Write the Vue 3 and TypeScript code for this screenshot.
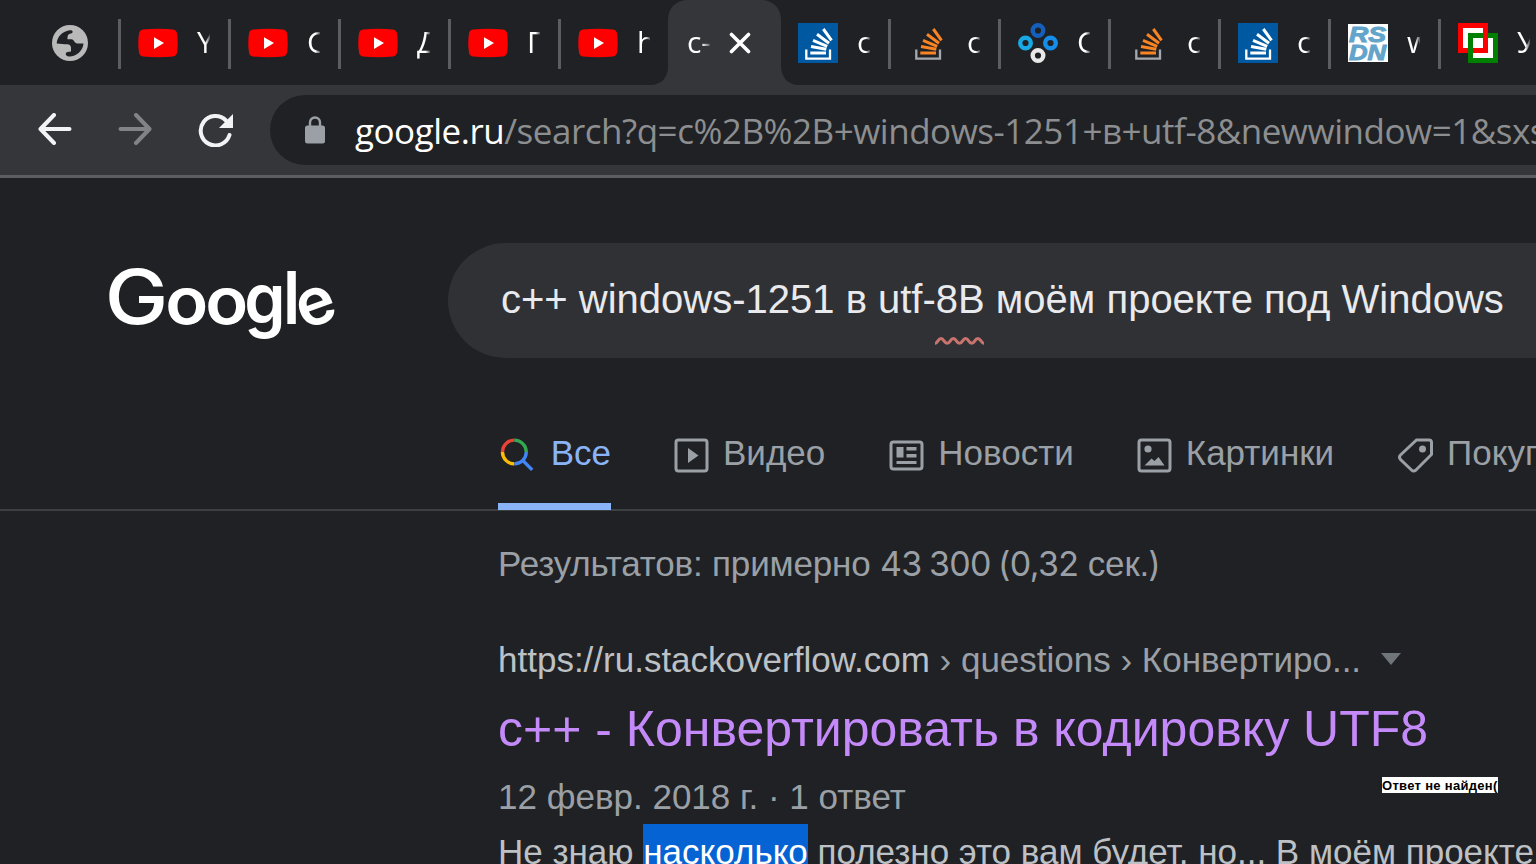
<script setup lang="ts">
interface Tab {
  icon: 'youtube' | 'so-blue' | 'so-orange' | 'nodes' | 'rsdn' | 'squares'
  title: string
  active?: boolean
  bare?: boolean
}

const tabs: Tab[] = [
  { icon: 'youtube', title: 'Yo' },
  { icon: 'youtube', title: 'Ca' },
  { icon: 'youtube', title: 'Де' },
  { icon: 'youtube', title: 'Пр' },
  { icon: 'youtube', title: 'ht', bare: true },
  { icon: 'so-blue', title: 'c-', active: true, bare: true },
  { icon: 'so-blue', title: 'c+' },
  { icon: 'so-orange', title: 'c+' },
  { icon: 'nodes', title: 'Co' },
  { icon: 'so-orange', title: 'c+' },
  { icon: 'so-blue', title: 'c+' },
  { icon: 'rsdn', title: 'wi' },
  { icon: 'squares', title: 'Ут' },
]
</script>

<template>
  <div class="screen">
    <div class="tabstrip">
      <div class="tab pinned">
        <svg width="36" height="36" viewBox="0 0 36 36">
          <circle cx="18" cy="18" r="18" fill="#b9b9b9" />
          <path d="M4.700 18.500C5 12 10 6.500 17.500 5.200C21.500 4.800 21.500 8 19 8.500C15.500 9 15.500 11 15.500 14.300L19.500 14.300C22.500 14.500 22 18.500 25.500 18.500L31.500 18.500C31 26 24 31.800 17 31.500C13 31.300 13 27.500 15.500 27L19 26.500V22.500C18.500 19.500 17 19.200 13 19.200Z" fill="#202124" />
        </svg>
        <i class="sep"></i>
      </div>
      <div v-for="(tab, i) in tabs" :key="i" class="tab" :class="{ active: tab.active }">
        <template v-if="tab.active">
          <svg class="tab-shape" width="150" height="85" viewBox="0 0 150 85">
            <path d="M0 85C12 85 18 77 18 66V20C18 8 26 0 38 0H111C123 0 131 8 131 20V66C131 77 138 85 149 85Z" fill="#35363a" />
          </svg>
        </template>
        <template v-else>
          <svg v-if="tab.icon === 'youtube'" class="fav" viewBox="0 0 40 40">
            <path d="M5 6.500Q20 5 35 6.500Q38.500 7 39 10.500Q40.500 20 39 29.500Q38.500 33 35 33.500Q20 35 5 33.500Q1.500 33 1 29.500Q-.500 20 1 10.500Q1.500 7 5 6.500Z" fill="#f00" />
            <path d="M16 14.200L26 20L16 26Z" fill="#fff" />
          </svg>
          <svg v-else-if="tab.icon === 'so-blue' || tab.icon === 'so-orange'" class="fav" viewBox="0 0 40 40">
            <rect v-if="tab.icon === 'so-blue'" width="40" height="40" fill="#0059a0" />
            <path d="M8.300 26.500V35.700H32V26.500" fill="none" :stroke="tab.icon === 'so-blue' ? '#fff' : '#a4a9b0'" stroke-width="2.300" />
            <path d="M12.300 30H28M13 23.600L28.300 26.300M15 17.300L29.200 23.300M19 11.300L31 20.300M25.300 6L33.500 17.300" fill="none" :stroke="tab.icon === 'so-blue' ? '#fff' : '#f98423'" stroke-width="3" />
          </svg>
          <svg v-else-if="tab.icon === 'nodes'" class="fav" viewBox="0 0 40 40" fill="none" stroke-width="4.400">
            <circle cx="20" cy="7.500" r="5.300" stroke="#1560bd" />
            <circle cx="7.500" cy="20" r="5.300" stroke="#19a8e4" />
            <circle cx="32.500" cy="20" r="5.300" stroke="#168de8" />
            <circle cx="20" cy="32.500" r="5.300" stroke="#e8e8e8" />
          </svg>
          <svg v-else-if="tab.icon === 'rsdn'" class="fav" viewBox="0 0 40 40">
            <rect y="1" width="40" height="38" fill="#fff" />
            <g class="rsdn-text" fill="#63a4ca" stroke="#63a4ca" stroke-width="1">
              <text x="1" y="19" textLength="37" lengthAdjust="spacingAndGlyphs">RS</text>
              <text x="1" y="37" textLength="37" lengthAdjust="spacingAndGlyphs">DN</text>
            </g>
          </svg>
          <svg v-else class="fav" viewBox="0 0 40 40">
            <path d="M2.500 2.500H27.500V27.500H2.500Z" fill="#fff" stroke="#f00" stroke-width="5" />
            <path d="M12.500 12.500H37.500V37.500H12.500Z" fill="#fff" stroke="#008000" stroke-width="5" />
            <path d="M27.500 9V27.500H15" fill="none" stroke="#f00" stroke-width="5" />
          </svg>
        </template>
        <span class="tab-title">{{ tab.title }}</span>
        <svg v-if="tab.active" class="close" width="22" height="22" viewBox="0 0 22 22">
          <path d="M2.500 2.500L19.500 19.500M19.500 2.500L2.500 19.500" stroke="#fff" stroke-width="3.600" stroke-linecap="round" />
        </svg>
        <i v-if="!tab.bare" class="sep"></i>
      </div>
    </div>

    <div class="toolbar">
      <svg class="nav-icon" width="34" height="32" viewBox="0 0 34 32" fill="none" stroke="#f1f3f4" stroke-width="4" stroke-linecap="round" stroke-linejoin="round">
        <path d="M31.500 16H3M16 2L2.500 16L16 30" />
      </svg>
      <svg class="nav-icon forward" width="34" height="32" viewBox="0 0 34 32" fill="none" stroke="#828387" stroke-width="4" stroke-linecap="round" stroke-linejoin="round">
        <path d="M2.500 16H31M18 2L31.500 16L18 30" />
      </svg>
      <svg class="nav-icon reload" width="36" height="34" viewBox="0 0 36 34">
        <path d="M31.500 22A14.700 14.700 0 1 1 28 7.500" fill="none" stroke="#f1f3f4" stroke-width="4" stroke-linecap="round" />
        <path d="M35 1V15H21Z" fill="#f1f3f4" />
      </svg>
      <div class="omnibox">
        <svg width="20" height="28" viewBox="0 0 20 28">
          <rect y="9.500" width="20" height="18" rx="2.500" fill="#9aa0a6" />
          <path d="M5 10V6.500a5 5 0 0 1 10 0V10" fill="none" stroke="#9aa0a6" stroke-width="2.400" />
        </svg>
        <div class="url"><b>google.ru</b><span>/search?q=c%2B%2B+windows-1251+в+utf-8&amp;newwindow=1&amp;sxsrf</span></div>
      </div>
    </div>

    <header class="search-head">
      <svg class="logo" width="240" height="90" viewBox="0 0 240 90" role="img" aria-label="Google">
        <g fill="#fff" text-anchor="middle">
          <text class="cap" transform="translate(31.500 65) scale(1.120 1)">G</text>
          <text transform="translate(81.800 65) scale(1.070 1)">o</text>
          <text transform="translate(121.800 65) scale(1.070 1)">o</text>
          <text transform="translate(160 65) scale(1 1.060)">g</text>
          <text class="ell" transform="translate(186.700 65) scale(.900 1)">l</text>
          <text transform="translate(211 47.500) rotate(-20) translate(0 18)">e</text>
        </g>
      </svg>
      <div class="search-box">
        <span class="query">c++ windows-1251 в utf-<span class="typo">8В<svg width="49" height="12" viewBox="0 0 49 12"><path d="M0 8.500C3 8 3 3.500 6 3.500S9 8.300 12.200 8.300S15.200 3.500 18.300 3.500S21.300 8.300 24.500 8.300S27.500 3.500 30.600 3.500S33.600 8.300 36.700 8.300S39.800 3.500 42.800 3.500S46 8 49 8.500" fill="none" stroke="#c9736f" stroke-width="3" /></svg></span> моём проекте под Windows</span>
      </div>
    </header>

    <nav class="filters">
      <a class="filter current">
        <svg width="35" height="36" viewBox="0 0 35 36" fill="none" stroke-width="3.400">
          <path d="M2.500 16A12 12 0 0 1 14.500 4" stroke="#ea4335" />
          <path d="M14.500 4A12 12 0 0 1 26.500 16" stroke="#34a853" />
          <path d="M2.500 16A12 12 0 0 0 14.500 28" stroke="#fbbc05" />
          <path d="M26.500 16A12 12 0 0 1 14.500 28M22.500 24L32.500 34" stroke="#4285f4" />
        </svg>
        <span>Все</span>
      </a>
      <a class="filter video">
        <svg width="35" height="35" viewBox="0 0 35 35">
          <rect x="2" y="2" width="31" height="31" rx="2.500" fill="none" stroke="#9aa0a6" stroke-width="3" />
          <path d="M14 10L24.500 17.500L14 25Z" fill="#9aa0a6" />
        </svg>
        <span>Видео</span>
      </a>
      <a class="filter news">
        <svg width="35" height="35" viewBox="0 0 35 35">
          <rect x="2" y="4" width="31" height="27" rx="2.500" fill="none" stroke="#9aa0a6" stroke-width="3" />
          <path d="M7.500 9H14.500V19.500H7.500ZM17.500 9H27.500V12.500H17.500ZM17.500 16H27.500V19.500H17.500ZM7.500 23H27.500V26H7.500Z" fill="#9aa0a6" />
        </svg>
        <span>Новости</span>
      </a>
      <a class="filter images">
        <svg width="35" height="35" viewBox="0 0 35 35">
          <rect x="2" y="2" width="31" height="31" rx="2.500" fill="none" stroke="#9aa0a6" stroke-width="3" />
          <circle cx="11" cy="11" r="3.600" fill="#9aa0a6" />
          <path d="M7.500 27.500L14.500 20.500L17.500 23L21.500 19L27.500 27.500Z" fill="#9aa0a6" />
        </svg>
        <span>Картинки</span>
      </a>
      <a class="filter shop">
        <svg width="36" height="35" viewBox="0 0 36 35">
          <path d="M18.500 2H31Q33.500 2 33.500 4.500V16.500L18 32Q15.500 34 13.500 32L2.500 21.500Q.500 19 2.500 17Z" fill="none" stroke="#9aa0a6" stroke-width="3" />
          <circle cx="24.500" cy="11" r="3.500" fill="#9aa0a6" />
        </svg>
        <span>Покупки</span>
      </a>
    </nav>

    <main class="results">
      <div class="stats">Результатов: примерно <span>43 300 (0,32</span> сек.<span>)</span></div>
      <div class="cite"><b>https://ru.stackoverflow.com</b> › questions › Конвертиро...
        <svg width="20" height="12" viewBox="0 0 20 12"><path d="M0 0H20L10 12Z" fill="#70757a" /></svg>
      </div>
      <h3 class="title">c++ - Конвертировать в кодировку UTF8</h3>
      <div class="date">12 февр. 2018 г. · 1 ответ</div>
      <p class="snippet">Не знаю <mark>насколько</mark> полезно это вам будет, но... В моём проекте</p>
    </main>
    <div class="note">Ответ не найден(</div>
  </div>
</template>

<style>
body {
  background: #202124;
  overflow: hidden;
}
</style>

<style scoped>
.screen {
  position: relative;
  width: 1536px;
  height: 864px;
  overflow: hidden;
  background: #202124;
  font-family: "Liberation Sans", Arial, sans-serif;
  white-space: nowrap;
}
.tabstrip {
  display: flex;
  height: 85px;
}
.tab {
  position: relative;
  flex: none;
  display: flex;
  align-items: center;
  width: 110px;
  height: 85px;
  padding-left: 17px;
  box-sizing: border-box;
}
.tab.pinned {
  width: 121px;
  padding-left: 52px;
}
.fav {
  flex: none;
  width: 40px;
  height: 40px;
  margin-top: 1px;
}
.sep {
  width: 3px;
  height: 50px;
  margin: 3px 0 0 auto;
  background: #5c5d60;
}
.tab-title {
  width: 13px;
  height: 40px;
  margin: 0 0 2px 19px;
  overflow: hidden;
  color: #fff;
  font: 30px/40px "Open Sans", "Noto Sans", sans-serif;
  -webkit-mask-image: linear-gradient(90deg, #000 65%, rgba(0, 0, 0, 0.2));
  mask-image: linear-gradient(90deg, #000 65%, rgba(0, 0, 0, 0.2));
}
.active .tab-title {
  position: relative;
  width: 23px;
  margin-left: -1px;
}
.tab-shape {
  position: absolute;
  left: -21px;
  top: 0;
}
.close {
  position: relative;
  margin-left: 19px;
}
.rsdn-text {
  font: italic 700 22px "Liberation Sans", Arial, sans-serif;
}
.toolbar {
  display: flex;
  align-items: center;
  height: 90px;
  padding-left: 38px;
  background: #35363a;
  border-bottom: 3px solid #5d5e61;
}
.nav-icon {
  flex: none;
  margin-top: -2px;
}
.forward {
  margin-left: 46px;
}
.reload {
  margin-top: -1px;
  margin-left: 46px;
}
.omnibox {
  flex: 1;
  display: flex;
  align-items: center;
  height: 70px;
  margin-left: 36px;
  padding-left: 35px;
  border-radius: 35px 0 0 35px;
  background: #202124;
  overflow: hidden;
}
.omnibox svg {
  flex: none;
}
.url {
  margin: 1px 0 0 30px;
  color: #8c8e90;
  font: 35px/50px "Open Sans", "Noto Sans", sans-serif;
  letter-spacing: -0.48px;
}
.url b {
  color: #fff;
  font-weight: 400;
}
.search-head {
  display: flex;
  height: 180px;
  padding-top: 65px;
  box-sizing: border-box;
}
.logo {
  flex: none;
  margin: 16px 103px 0 105px;
  overflow: visible;
  font: 600 66px Inter, sans-serif;
}
.cap {
  font-size: 76px;
  font-weight: 500;
}
.ell {
  font-size: 73px;
}
.search-box {
  flex: 1;
  height: 115px;
  padding-left: 53px;
  box-sizing: border-box;
  border-radius: 58px 0 0 58px;
  background: #303134;
  color: #e8eaed;
  font-size: 40px;
  line-height: 113px;
}
.typo {
  position: relative;
}
.typo svg {
  position: absolute;
  left: -1px;
  bottom: -26px;
}
.filters {
  display: flex;
  height: 153px;
  padding-left: 498px;
  box-sizing: border-box;
  border-bottom: 2px solid #3c4043;
}
.filter {
  flex: none;
  display: flex;
  align-items: flex-start;
  height: 152px;
  box-sizing: border-box;
  color: #9aa0a6;
  font-size: 35px;
}
.filter svg {
  margin-top: 80px;
}
.filter span {
  margin: 75px 0 0 14px;
  line-height: 40px;
}
.current {
  width: 113px;
  color: #8ab4f8;
  border-bottom: 7px solid #8ab4f8;
}
.current svg {
  margin: 78px 0 0 2px;
}
.current span {
  margin-left: 16px;
}
.video {
  margin-left: 63px;
}
.news {
  margin-left: 64px;
}
.images {
  margin-left: 63px;
}
.shop {
  margin-left: 64px;
}
.shop span {
  margin-left: 13px;
}
.results {
  padding: 33px 0 0 498px;
  color: #9aa0a6;
  font-size: 35px;
  line-height: 40px;
}
.stats {
  letter-spacing: -0.17px;
}
.stats span {
  font-family: Inter, sans-serif;
  font-size: 34px;
  line-height: 30px;
  letter-spacing: -0.7px;
  word-spacing: -1.5px;
}
.stats span:last-child {
  letter-spacing: 0;
  margin-left: -1px;
}
.cite {
  margin-top: 56px;
}
.cite b {
  color: #bdc1c6;
  font-weight: 400;
}
.cite svg {
  margin: 0 0 7px 10px;
}
.title {
  margin: 19px 0 0;
  color: #c58af9;
  font-size: 50px;
  font-weight: 400;
  line-height: 60px;
}
.date {
  margin-top: 18px;
}
.snippet {
  margin: 15px 0 0;
  color: #bdc1c6;
}
.snippet mark {
  padding-top: 8px;
  color: #fff;
  background: #0663d4;
}
.note {
  position: absolute;
  left: 1382px;
  top: 777px;
  width: 116px;
  height: 16px;
  overflow: hidden;
  background: #fff;
  color: #000;
  font-size: 13px;
  font-weight: 700;
  line-height: 17px;
  letter-spacing: 0.3px;
}
</style>
